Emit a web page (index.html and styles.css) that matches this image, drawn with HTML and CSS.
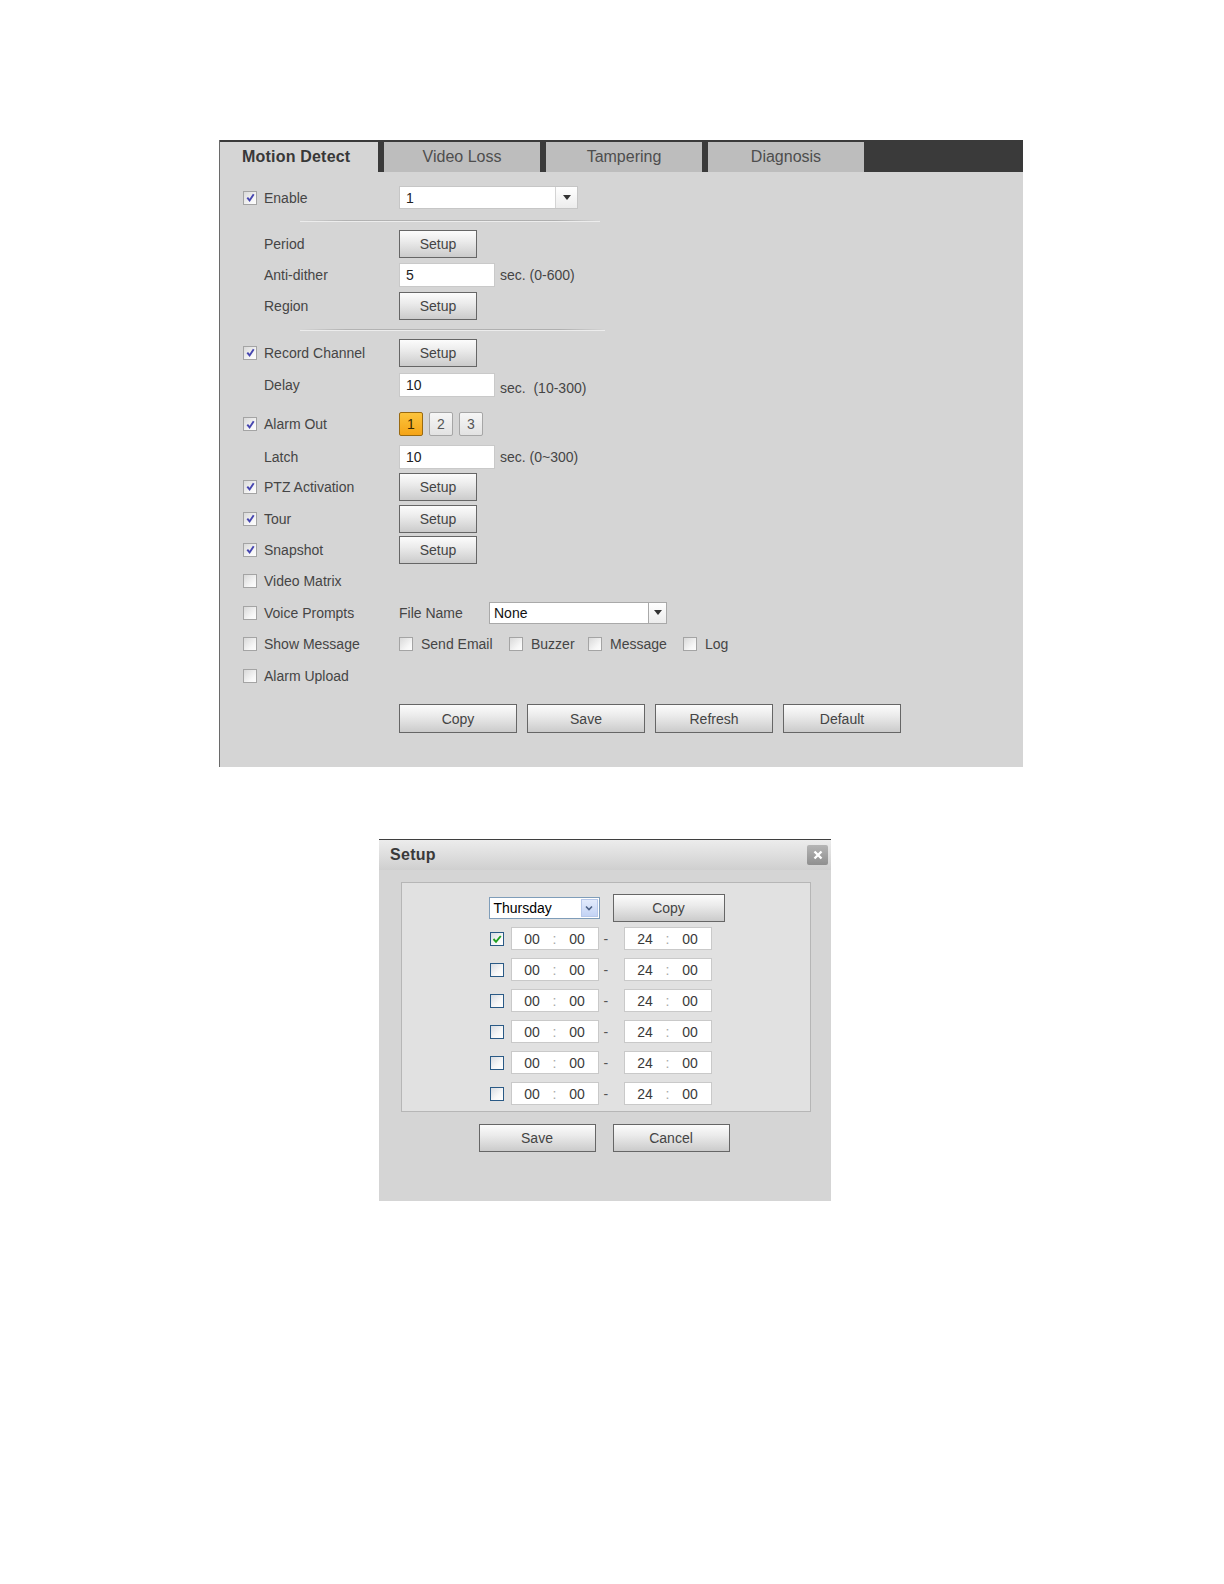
FILE: index.html
```html
<!DOCTYPE html>
<html>
<head>
<meta charset="utf-8">
<link rel="stylesheet" href="styles.css">
</head>
<body>
<div class="page">
  <div class="panel">
    <div class="tabs">
      <div class="tab active">Motion Detect</div>
      <div class="tab">Video Loss</div>
      <div class="tab">Tampering</div>
      <div class="tab">Diagnosis</div>
    </div>
    <div class="pbody">
      <div class="row h31">
        <span class="cb on"><svg viewBox="0 0 12 12"><path d="M2.5 6.2 L5 9.2 L9.5 2.5"/></svg></span>
        <span class="lbl">Enable</span>
        <div class="select sel-ch"><span class="sv">1</span><span class="arr"><svg viewBox="0 0 8 5"><path d="M0 0 H8 L4 5 Z"/></svg></span></div>
      </div>
      <div class="row h16"><div class="sep"></div></div>
      <div class="row h29">
        <span class="cb none"></span><span class="lbl">Period</span>
        <button class="btn setup">Setup</button>
      </div>
      <div class="row h33">
        <span class="cb none"></span><span class="lbl">Anti-dither</span>
        <div class="inp">5</div><span class="unit">sec. (0-600)</span>
      </div>
      <div class="row h30">
        <span class="cb none"></span><span class="lbl">Region</span>
        <button class="btn setup">Setup</button>
      </div>
      <div class="row h17"><div class="sep sep2"></div></div>
      <div class="row h29">
        <span class="cb on"><svg viewBox="0 0 12 12"><path d="M2.5 6.2 L5 9.2 L9.5 2.5"/></svg></span>
        <span class="lbl">Record Channel</span>
        <button class="btn setup">Setup</button>
      </div>
      <div class="row h35">
        <span class="cb none"></span><span class="lbl">Delay</span>
        <div class="inp">10</div><span class="unit low">sec.&nbsp; (10-300)</span>
      </div>
      <div class="row h41 alarm">
        <span class="cb on"><svg viewBox="0 0 12 12"><path d="M2.5 6.2 L5 9.2 L9.5 2.5"/></svg></span>
        <span class="lbl">Alarm Out</span>
        <div class="nums"><span class="num sel">1</span><span class="num">2</span><span class="num">3</span></div>
      </div>
      <div class="row h27">
        <span class="cb none"></span><span class="lbl">Latch</span>
        <div class="inp">10</div><span class="unit">sec. (0~300)</span>
      </div>
      <div class="row h33">
        <span class="cb on"><svg viewBox="0 0 12 12"><path d="M2.5 6.2 L5 9.2 L9.5 2.5"/></svg></span>
        <span class="lbl">PTZ Activation</span>
        <button class="btn setup">Setup</button>
      </div>
      <div class="row h31">
        <span class="cb on"><svg viewBox="0 0 12 12"><path d="M2.5 6.2 L5 9.2 L9.5 2.5"/></svg></span>
        <span class="lbl">Tour</span>
        <button class="btn setup">Setup</button>
      </div>
      <div class="row h31">
        <span class="cb on"><svg viewBox="0 0 12 12"><path d="M2.5 6.2 L5 9.2 L9.5 2.5"/></svg></span>
        <span class="lbl">Snapshot</span>
        <button class="btn setup">Setup</button>
      </div>
      <div class="row h32">
        <span class="cb"></span><span class="lbl">Video Matrix</span>
      </div>
      <div class="row h31">
        <span class="cb"></span><span class="lbl">Voice Prompts</span>
        <span class="fname">File Name</span>
        <div class="select sel-file"><span class="sv">None</span><span class="arr"><svg viewBox="0 0 8 5"><path d="M0 0 H8 L4 5 Z"/></svg></span></div>
      </div>
      <div class="row h32">
        <span class="cb"></span><span class="lbl">Show Message</span>
        <div class="opts">
          <span class="cb"></span><span class="opt o1">Send Email</span>
          <span class="cb"></span><span class="opt o2">Buzzer</span>
          <span class="cb"></span><span class="opt o3">Message</span>
          <span class="cb"></span><span class="opt">Log</span>
        </div>
      </div>
      <div class="row h31">
        <span class="cb"></span><span class="lbl">Alarm Upload</span>
      </div>
      <div class="actions">
        <button class="btn big">Copy</button>
        <button class="btn big">Save</button>
        <button class="btn big">Refresh</button>
        <button class="btn big">Default</button>
      </div>
    </div>
  </div>

  <div class="dialog">
    <div class="dhead">
      <span class="dtitle">Setup</span>
      <span class="close"><svg viewBox="0 0 12 12"><path d="M2.5 2.5 L9.5 9.5 M9.5 2.5 L2.5 9.5"/></svg></span>
    </div>
    <div class="dbody">
      <div class="inner">
        <div class="col">
          <div class="drow-top">
            <div class="daysel"><span class="dv">Thursday</span><span class="darr"><svg viewBox="0 0 10 8"><path d="M2 2.5 L5 5.5 L8 2.5"/></svg></span></div>
            <button class="btn dcopy">Copy</button>
          </div>
          <div class="trow"><span class="dcb"><svg viewBox="0 0 12 12"><path d="M2.5 6 L5 8.8 L9.8 3"/></svg></span><div class="tbox"><span>00</span><span class="colon">:</span><span>00</span></div><span class="dash">-</span><div class="tbox"><span>24</span><span class="colon">:</span><span>00</span></div></div>
          <div class="trow"><span class="dcb"></span><div class="tbox"><span>00</span><span class="colon">:</span><span>00</span></div><span class="dash">-</span><div class="tbox"><span>24</span><span class="colon">:</span><span>00</span></div></div>
          <div class="trow"><span class="dcb"></span><div class="tbox"><span>00</span><span class="colon">:</span><span>00</span></div><span class="dash">-</span><div class="tbox"><span>24</span><span class="colon">:</span><span>00</span></div></div>
          <div class="trow"><span class="dcb"></span><div class="tbox"><span>00</span><span class="colon">:</span><span>00</span></div><span class="dash">-</span><div class="tbox"><span>24</span><span class="colon">:</span><span>00</span></div></div>
          <div class="trow"><span class="dcb"></span><div class="tbox"><span>00</span><span class="colon">:</span><span>00</span></div><span class="dash">-</span><div class="tbox"><span>24</span><span class="colon">:</span><span>00</span></div></div>
          <div class="trow"><span class="dcb"></span><div class="tbox"><span>00</span><span class="colon">:</span><span>00</span></div><span class="dash">-</span><div class="tbox"><span>24</span><span class="colon">:</span><span>00</span></div></div>
        </div>
      </div>
      <div class="dactions">
        <button class="btn dbtn">Save</button>
        <button class="btn dbtn">Cancel</button>
      </div>
    </div>
  </div>
</div>
</body>
</html>
```

FILE: styles.css
```css
* { box-sizing: border-box; }
body {
  margin: 0;
  background: #ffffff;
  font-family: "Liberation Sans", Arial, sans-serif;
  font-size: 14px;
  color: #454545;
}
.page {
  padding-top: 140px;
  display: flex;
  flex-direction: column;
}
.panel {
  margin-left: 219px;
  width: 804px;
  height: 627px;
  background: #d5d5d5;
  border-left: 1px solid #6a6a6a;
}
.tabs {
  height: 32px;
  background: #3a3a3a;
  display: flex;
  padding-top: 2px;
  gap: 6px;
}
.tab {
  width: 156px;
  height: 30px;
  background: #bdbdbd;
  color: #4e4e4e;
  font-size: 16px;
  display: flex;
  align-items: center;
  justify-content: center;
}
.tab.active {
  width: 158px;
  background: #d5d5d5;
  color: #383838;
  font-weight: bold;
  justify-content: flex-start;
  padding-left: 22px;
  letter-spacing: 0.2px;
}
.pbody {
  padding: 10px 0 0 23px;
}
.row {
  display: flex;
  align-items: center;
}
.h16 { height: 16px; }
.h17 { height: 17px; }
.h27 { height: 27px; }
.h29 { height: 29px; }
.h30 { height: 30px; }
.h31 { height: 31px; }
.h32 { height: 32px; }
.h33 { height: 33px; }
.h35 { height: 35px; }
.h41 { height: 41px; }
.alarm { padding-top: 3px; }

.cb {
  width: 14px;
  height: 14px;
  flex: none;
  border: 1px solid #a4a4a4;
  background: linear-gradient(135deg, #d9d9d9 0%, #f7f7f7 70%, #fdfdfd 100%);
  display: flex;
  align-items: center;
  justify-content: center;
}
.cb.none { visibility: hidden; }
.cb svg { width: 11px; height: 11px; }
.cb svg path { fill: none; stroke: #4646b0; stroke-width: 2.1; }
.lbl {
  margin-left: 7px;
  width: 135px;
  flex: none;
  white-space: nowrap;
}

.sep {
  margin-left: 57px;
  width: 300px;
  height: 2px;
  background: linear-gradient(90deg, rgba(170,170,170,0) 0%, #b3b3b3 15%, #afafaf 85%, rgba(170,170,170,0) 100%);
  border-bottom: 1px solid #ececec;
}
.sep2 { width: 305px; }

.btn {
  font-family: "Liberation Sans", Arial, sans-serif;
  font-size: 14px;
  color: #444444;
  border: 1px solid #666666;
  background: linear-gradient(180deg, #fcfcfc 0%, #ebebeb 40%, #cbcbcb 100%);
  padding: 0;
  margin: 0;
}
.setup { width: 78px; height: 28px; }

.inp {
  width: 96px;
  height: 24px;
  background: #ffffff;
  border: 1px solid #c9c9c9;
  color: #222;
  padding-left: 6px;
  display: flex;
  align-items: center;
}
.unit { margin-left: 5px; white-space: nowrap; }
.unit.low { margin-top: 7px; }

.select {
  height: 23px;
  background: #ffffff;
  border: 1px solid #c6c6c6;
  display: flex;
  color: #222;
}
.sel-ch { width: 179px; }
.sel-file { width: 178px; height: 22px; border-color: #a9a9a9; }
.sv { flex: 1; padding-left: 6px; display: flex; align-items: center; }
.sel-file .sv { padding-left: 4px; color: #111; }
.arr {
  width: 22px;
  border-left: 1px solid #d4d4d4;
  background: linear-gradient(180deg, #ffffff, #ececec);
  display: flex;
  align-items: center;
  justify-content: center;
}
.sel-file .arr { width: 18px; border-left-color: #a9a9a9; }
.arr svg { width: 8px; height: 5px; }
.arr svg path { fill: #333; }

.nums { display: flex; gap: 6px; }
.num {
  width: 24px;
  height: 24px;
  border: 1px solid #a6a6a6;
  border-radius: 2px;
  background: linear-gradient(180deg, #f6f6f6, #e2e2e2);
  display: flex;
  align-items: center;
  justify-content: center;
  color: #555;
}
.num.sel {
  background: linear-gradient(180deg, #fcc43c 0%, #f5a417 100%);
  border-color: #9a6a10;
  color: #3a2a00;
}

.fname { width: 90px; white-space: nowrap; }
.opts { display: flex; align-items: center; }
.opt { margin-left: 8px; white-space: nowrap; }
.o1 { width: 88px; }
.o2 { width: 57px; }
.o3 { width: 73px; }

.actions {
  display: flex;
  gap: 10px;
  margin-top: 13px;
  margin-left: 156px;
}
.big { width: 118px; height: 29px; }

/* dialog */
.dialog {
  margin-top: 72px;
  margin-left: 379px;
  width: 452px;
  height: 362px;
  background: #d5d5d5;
  border-top: 1px solid #3f3f3f;
}
.dhead {
  height: 30px;
  background: linear-gradient(180deg, #ececec 0%, #dedede 50%, #cfcfcf 100%);
  display: flex;
  align-items: center;
  justify-content: space-between;
  padding: 0 3px 0 11px;
}
.dtitle {
  font-weight: bold;
  font-size: 16px;
  color: #3a3a3a;
  letter-spacing: 0.3px;
}
.close {
  width: 21px;
  height: 20px;
  border-radius: 2px;
  background: linear-gradient(180deg, #b5b5b5, #8f8f8f);
  display: flex;
  align-items: center;
  justify-content: center;
}
.close svg { width: 12px; height: 12px; }
.close svg path { stroke: #ffffff; stroke-width: 2.4; fill: none; }
.dbody {
  padding: 12px 20px 0 22px;
}
.inner {
  height: 230px;
  background: #e1e1e1;
  border: 1px solid #b6b6b6;
  display: flex;
  justify-content: center;
  padding-top: 11px;
}
.col {
  width: 236px;
  display: flex;
  flex-direction: column;
  gap: 8px;
  margin-left: 1px;
}
.drow-top {
  height: 28px;
  display: flex;
  align-items: center;
  justify-content: space-between;
  margin-bottom: -3px;
}
.daysel {
  width: 111px;
  height: 22px;
  background: #ffffff;
  border: 1px solid #7f9db9;
  display: flex;
  color: #000;
}
.dv { flex: 1; padding-left: 4px; display: flex; align-items: center; }
.darr {
  width: 17px;
  margin: 1px;
  border: 1px solid #b7c8ea;
  background: linear-gradient(180deg, #e3ebfd, #c3d3f5);
  display: flex;
  align-items: center;
  justify-content: center;
}
.darr svg { width: 10px; height: 8px; }
.darr svg path { fill: none; stroke: #4d6185; stroke-width: 1.6; }
.dcopy { width: 112px; height: 28px; }
.trow {
  height: 23px;
  display: flex;
  align-items: center;
}
.dcb {
  width: 14px;
  height: 14px;
  margin-left: 1px;
  border: 1px solid #2a5a86;
  background: linear-gradient(135deg, #d8dce2 0%, #f8f8f8 60%, #ffffff 100%);
  display: flex;
  align-items: center;
  justify-content: center;
}
.dcb svg { width: 12px; height: 12px; }
.dcb svg path { fill: none; stroke: #21a121; stroke-width: 1.9; }
.tbox {
  width: 88px;
  height: 23px;
  background: #ffffff;
  border: 1px solid #c9c9c9;
  display: flex;
  align-items: center;
  justify-content: space-evenly;
  color: #3a3a3a;
  margin-left: 7px;
}
.trow .tbox:last-child { margin-left: 15px; }
.colon { color: #a8a8a8; }
.dash { margin-left: 5px; width: 5px; color: #555; }
.dactions {
  display: flex;
  justify-content: center;
  gap: 17px;
  margin-top: 12px;
  margin-left: -4px;
}
.dbtn { width: 117px; height: 28px; }
```
